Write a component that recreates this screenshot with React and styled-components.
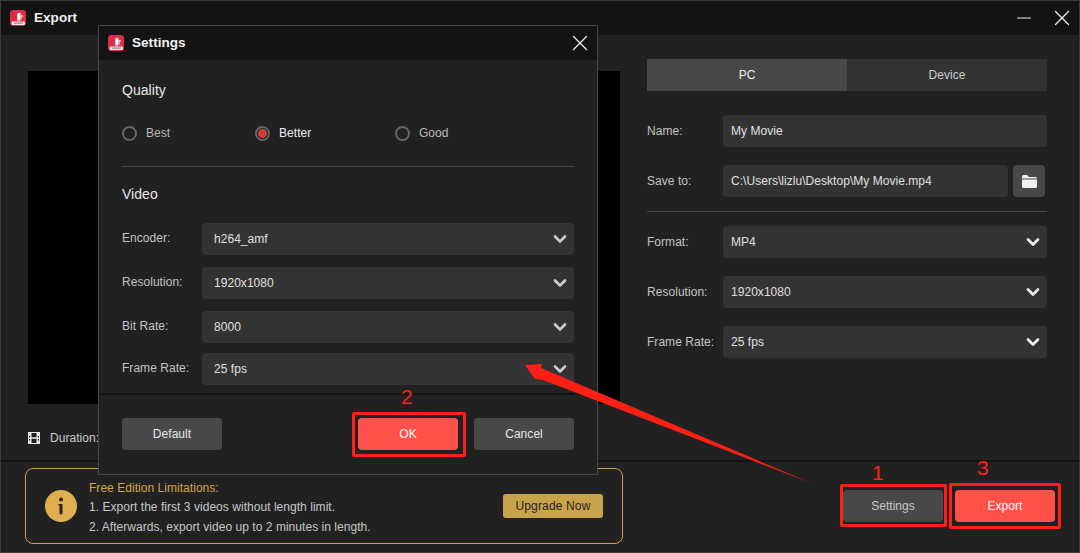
import { createGlobalStyle, styled } from 'styled-components';
import { ChevronDown, X, Minus } from 'lucide-react';

const GlobalStyle = createGlobalStyle`
  html, body { margin: 0; padding: 0; background: #212121; }
  * { box-sizing: border-box; }
  body { font-family: "Liberation Sans", Arial, sans-serif; font-size: 12px; letter-spacing: 0.04px; color: #ddd; overflow: hidden; }
`;

const Win = styled.div`
  position: relative;
  width: 1080px;
  height: 553px;
  background: #212121;
  border: 1px solid #3c3c3c;
  display: flex;
  flex-direction: column;
  overflow: hidden;
`;

const TitleBar = styled.div`
  height: 34px;
  flex: none;
  background: #131313;
  display: flex;
  align-items: center;
  padding-left: 9px;
  gap: 8px;
  font-size: 13.5px;
  font-weight: 700;
  color: #f2f2f2;
`;

const TitleText = styled.span`
  margin-bottom: 1px;
`;

const WinControls = styled.div`
  margin-left: auto;
  display: flex;
  align-items: center;
  gap: 14px;
  padding-right: 4px;
  color: #eee;
`;

const Main = styled.div`
  flex: 1;
  display: flex;
  min-height: 0;
`;

const LeftCol = styled.div`
  width: 646px;
  padding: 36px 27px 0 27px;
`;

const Preview = styled.div`
  height: 333px;
  background: #000;
`;

const Duration = styled.div`
  display: flex;
  align-items: center;
  gap: 10px;
  margin-top: 27px;
  color: #ccc;
`;

const RightCol = styled.div`
  width: 400px;
  padding-top: 24px;
`;

const Tabs = styled.div`
  display: flex;
  height: 32px;
  margin-bottom: 24px;
`;

const Tab = styled.div`
  flex: 1;
  display: flex;
  align-items: center;
  justify-content: center;
  background: ${(p) => (p.$active ? '#484848' : '#333')};
  color: ${(p) => (p.$active ? '#eee' : '#ccc')};
`;

const Row = styled.div`
  display: flex;
  align-items: center;
  margin-bottom: ${(p) => p.$mb ?? 18}px;
`;

const Label = styled.div`
  width: ${(p) => p.$w}px;
  flex: none;
  color: #c4c4c4;
  margin-bottom: ${(p) => (p.$up ? 3 : 0)}px;
`;

const Field = styled.div`
  flex: 1;
  height: 32px;
  display: flex;
  align-items: center;
  justify-content: space-between;
  padding: 0 8px 0 ${(p) => p.$pad ?? 8}px;
  background: #333;
  border-radius: 4px;
  color: #e0e0e0;
`;

const FolderBtn = styled.div`
  width: 32px;
  height: 32px;
  margin: 0 2px 0 5px;
  flex: none;
  display: flex;
  align-items: center;
  justify-content: center;
  background: #484848;
  border-radius: 4px;
`;

const Rule = styled.div`
  height: 1px;
  background: #444;
  margin-bottom: ${(p) => p.$mb ?? 0}px;
`;

const Footer = styled.div`
  height: 92px;
  flex: none;
  border-top: 2px solid #121212;
  padding: 6px 0 0 24px;
  display: flex;
  align-items: flex-start;
`;

const Notice = styled.div`
  width: 598px;
  height: 76px;
  border: 1px solid #c9a24c;
  border-radius: 8px;
  display: flex;
  align-items: center;
  padding: 0 19px;
`;

const InfoDot = styled.div`
  width: 32px;
  height: 32px;
  flex: none;
  border-radius: 50%;
  background: #e0b04f;
  display: flex;
  align-items: center;
  justify-content: center;
  margin-right: 12px;
`;

const NoticeText = styled.div`
  flex: 1;
  margin-top: 2px;
  line-height: 20px;
  color: #c8c8c8;
`;

const NoticeTitle = styled.div`
  color: #d5a640;
  margin: 1px 0 -1px;
`;

const Upgrade = styled.div`
  width: 100px;
  height: 24px;
  flex: none;
  display: flex;
  align-items: center;
  justify-content: center;
  background: #c9a24c;
  border-radius: 3px;
  color: #222;
  letter-spacing: 0.15px;
`;

const Actions = styled.div`
  margin-left: 220px;
  padding-top: 22px;
  display: flex;
  gap: 12px;
`;

const Button = styled.div`
  width: 100px;
  height: 32px;
  display: flex;
  align-items: center;
  justify-content: center;
  border-radius: 4px;
  background: ${(p) => (p.$red ? '#ff5049' : '#484848')};
  color: ${(p) => (p.$red ? '#fff' : p.$dim ? '#c8c8c8' : '#e8e8e8')};
`;

const Dialog = styled.div`
  position: absolute;
  left: 97px;
  top: 24px;
  width: 500px;
  height: 450px;
  background: #212121;
  border: 1px solid #484848;
  display: flex;
  flex-direction: column;
`;

const DialogBody = styled.div`
  padding: 0 23px;
  flex: 1;
`;

const Heading = styled.div`
  font-size: 14px;
  color: #e8e8e8;
  line-height: 16px;
  margin: ${(p) => p.$top}px 0 ${(p) => p.$bottom}px;
`;

const Radios = styled.div`
  display: flex;
  align-items: center;
  height: 16px;
  margin: 27px 0 25px;
`;

const RadioItem = styled.div`
  width: ${(p) => p.$w}px;
  display: flex;
  align-items: center;
  gap: 9px;
  color: ${(p) => (p.$on ? '#eee' : '#bbb')};
`;

const RadioDot = styled.div`
  width: 15px;
  height: 15px;
  border-radius: 50%;
  border: 2px solid #666;
  display: flex;
  align-items: center;
  justify-content: center;
  &::after {
    content: '';
    width: 9px;
    height: 9px;
    border-radius: 50%;
    background: ${(p) => (p.$on ? '#cf3e37' : 'transparent')};
  }
`;

const DialogFooter = styled.div`
  flex: none;
  height: 81px;
  border-top: 2px solid #141414;
  padding: 23px 23px 0;
  display: flex;
  gap: 16px;
`;

const Spacer = styled.div`
  flex: 1;
`;

const Caret = styled(ChevronDown)`
  margin: -2px -4px -2px 0;
  flex: none;
`;

// annotations pasted on top of the screenshot
const Mark = styled.div`
  position: absolute;
  left: ${(p) => p.$x}px;
  top: ${(p) => p.$y}px;
  width: ${(p) => p.$w}px;
  height: ${(p) => p.$h}px;
  border: 3px solid #ff2015;
  border-radius: 2px;
`;

const Num = styled.div`
  position: absolute;
  left: ${(p) => p.$x}px;
  top: ${(p) => p.$y}px;
  font-size: 21px;
  line-height: 24px;
  color: #ff2015;
`;

const Arrow = styled.svg`
  position: absolute;
  left: -1px;
  top: -1px;
`;

const Logo = () => (
  <svg width="16" height="16" viewBox="0 0 16 16">
    <rect width="16" height="16" rx="3.500" fill="#dc2c48" />
    <path d="M7.300 10.500V3.500L10.300 2.500v8z" fill="#fff" />
    <path d="M10.300 4.500l3.500 1.500-2.200 1.300v2.300h-1.300z" fill="#f8c8d0" />
    <rect x="1.500" y="11.500" width="13.500" height="3.500" rx="1.200" fill="#fbe4e8" />
    <rect x="4" y="12.500" width="9" height="1.200" fill="#8a8a8a" />
  </svg>
);

const Film = () => (
  <svg width="12" height="12" viewBox="0 0 12 12" fill="#e8e8e8">
    <path d="M0 0h12v12H0zM1 4v1.500h1.200V4zm0 3v1.500h1.200V7zm8.800-3v1.500H11V4zm0 3v1.500H11V7zM3.500 1v4.200h5V1zm0 5.800V11h5V6.800z" fillRule="evenodd" />
  </svg>
);

const Folder = () => (
  <svg width="15" height="13" viewBox="0 0 15 13" fill="#f0f0f0">
    <path d="M0 1.500Q0 0 1.500 0h3.500l2 2h6.500Q15 2 15 3.500H0z" />
    <path d="M0 4.500h15v7Q15 13 13.500 13h-12Q0 13 0 11.500z" />
  </svg>
);

const Info = () => (
  <svg width="6" height="18" viewBox="0 0 6 18" fill="#2a2315">
    <circle cx="3" cy="2.500" r="2" />
    <path d="M0.500 7h4v9a1.500 1.500 0 0 1-3 0V8.500H0.500z" />
  </svg>
);

function App() {
  return (
    <Win>
      <GlobalStyle />
      <TitleBar>
        <Logo />
        <TitleText>Export</TitleText>
        <WinControls>
          <Minus size={22} strokeWidth={1.2} />
          <X size={26} strokeWidth={1.2} />
        </WinControls>
      </TitleBar>
      <Main>
        <LeftCol>
          <Preview />
          <Duration>
            <Film />
            Duration:
          </Duration>
        </LeftCol>
        <RightCol>
          <Tabs>
            <Tab $active>PC</Tab>
            <Tab>Device</Tab>
          </Tabs>
          <Row>
            <Label $w={76}>Name:</Label>
            <Field>My Movie</Field>
          </Row>
          <Row $mb={14}>
            <Label $w={76}>Save to:</Label>
            <Field>C:\Users\lizlu\Desktop\My Movie.mp4</Field>
            <FolderBtn><Folder /></FolderBtn>
          </Row>
          <Rule $mb={14} />
          <Row>
            <Label $w={76}>Format:</Label>
            <Field>MP4<Caret size={20} strokeWidth={3.2} color="#eee" /></Field>
          </Row>
          <Row>
            <Label $w={76}>Resolution:</Label>
            <Field>1920x1080<Caret size={20} strokeWidth={3.2} color="#eee" /></Field>
          </Row>
          <Row>
            <Label $w={76}>Frame Rate:</Label>
            <Field>25 fps<Caret size={20} strokeWidth={3.2} color="#eee" /></Field>
          </Row>
        </RightCol>
      </Main>
      <Footer>
        <Notice>
          <InfoDot><Info /></InfoDot>
          <NoticeText>
            <NoticeTitle>Free Edition Limitations:</NoticeTitle>
            <div>1. Export the first 3 videos without length limit.</div>
            <div>2. Afterwards, export video up to 2 minutes in length.</div>
          </NoticeText>
          <Upgrade>Upgrade Now</Upgrade>
        </Notice>
        <Actions>
          <Button $dim>Settings</Button>
          <Button $red>Export</Button>
        </Actions>
      </Footer>

      <Dialog>
        <TitleBar>
          <Logo />
          <TitleText>Settings</TitleText>
          <WinControls><X size={26} strokeWidth={1.2} /></WinControls>
        </TitleBar>
        <DialogBody>
          <Heading $top={22} $bottom={0}>Quality</Heading>
          <Radios>
            <RadioItem $w={133}><RadioDot />Best</RadioItem>
            <RadioItem $w={140} $on><RadioDot $on />Better</RadioItem>
            <RadioItem $w={100}><RadioDot />Good</RadioItem>
          </Radios>
          <Rule />
          <Heading $top={19} $bottom={21}>Video</Heading>
          <Row $mb={12}>
            <Label $w={80} $up>Encoder:</Label>
            <Field $pad={12}>h264_amf<Caret size={20} strokeWidth={3.2} color="#ccc" /></Field>
          </Row>
          <Row $mb={12}>
            <Label $w={80} $up>Resolution:</Label>
            <Field $pad={12}>1920x1080<Caret size={20} strokeWidth={3.2} color="#ccc" /></Field>
          </Row>
          <Row $mb={10}>
            <Label $w={80} $up>Bit Rate:</Label>
            <Field $pad={12}>8000<Caret size={20} strokeWidth={3.2} color="#ccc" /></Field>
          </Row>
          <Row $mb={0}>
            <Label $w={80} $up>Frame Rate:</Label>
            <Field $pad={12}>25 fps<Caret size={20} strokeWidth={3.2} color="#ccc" /></Field>
          </Row>
        </DialogBody>
        <DialogFooter>
          <Button>Default</Button>
          <Spacer />
          <Button $red>OK</Button>
          <Button>Cancel</Button>
        </DialogFooter>
      </Dialog>

      <Mark $x={351} $y={411} $w={114} $h={45} />
      <Mark $x={839} $y={483} $w={107} $h={43} />
      <Mark $x={948} $y={482} $w={112} $h={46} />
      <Num $x={400} $y={384}>2</Num>
      <Num $x={871} $y={460}>1</Num>
      <Num $x={976} $y={455}>3</Num>
      <Arrow width="1080" height="553" viewBox="0 0 1080 553">
        <polygon points="525,365 542,364 541,368 811,483 543,380 535,379" fill="#ff2015" />
      </Arrow>
    </Win>
  );
}

export default App;
